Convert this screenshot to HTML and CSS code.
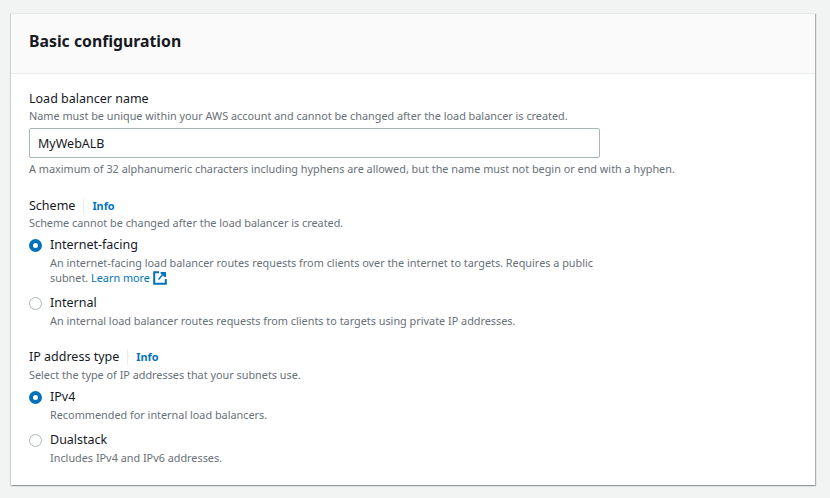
FILE: index.html
```html
<!DOCTYPE html>
<html lang="en">
<head>
<meta charset="utf-8">
<title>Basic configuration</title>
<link rel="stylesheet" href="styles.css">
</head>
<body>
<section class="card">
  <header class="card-head"><h2>Basic configuration</h2></header>
  <div class="card-body">
    <div class="field">
      <div class="label">Load balancer name</div>
      <div class="desc">Name must be unique within your AWS account and cannot be changed after the load balancer is created.</div>
      <input class="text-input" type="text" value="MyWebALB">
      <div class="desc hint">A maximum of 32 alphanumeric characters including hyphens are allowed, but the name must not begin or end with a hyphen.</div>
    </div>
    <div class="field scheme">
      <div class="label">Scheme<a class="info">Info</a></div>
      <div class="desc">Scheme cannot be changed after the load balancer is created.</div>
      <div class="radio on first">
        <span class="dot"></span>
        <div>
          <div class="radio-label">Internet-facing</div>
          <div class="desc radio-desc">An internet-facing load balancer routes requests from clients over the internet to targets. Requires a public subnet. <a class="link">Learn more</a>
            <svg class="ext" width="14" height="14" viewBox="0 0 14 14" aria-hidden="true"><path d="M6 1.2H1.2v11.6h11.6V8" fill="none" stroke="#0073bb" stroke-width="2"/><path d="M8 1h5v5h-1.6L9.9 4.5 6 9 5 8l3.8-4.4L7.6 2.4V1z" fill="#0073bb"/></svg>
          </div>
        </div>
      </div>
      <div class="radio">
        <span class="dot"></span>
        <div>
          <div class="radio-label">Internal</div>
          <div class="desc radio-desc">An internal load balancer routes requests from clients to targets using private IP addresses.</div>
        </div>
      </div>
    </div>
    <div class="field ip">
      <div class="label">IP address type<a class="info">Info</a></div>
      <div class="desc">Select the type of IP addresses that your subnets use.</div>
      <div class="radio on first">
        <span class="dot"></span>
        <div>
          <div class="radio-label">IPv4</div>
          <div class="desc radio-desc">Recommended for internal load balancers.</div>
        </div>
      </div>
      <div class="radio">
        <span class="dot"></span>
        <div>
          <div class="radio-label">Dualstack</div>
          <div class="desc radio-desc">Includes IPv4 and IPv6 addresses.</div>
        </div>
      </div>
    </div>
  </div>
</section>
</body>
</html>
```
FILE: styles.css
```css
* { box-sizing: border-box; }
html, body { margin: 0; height: 100%; }
body {
  background: #f2f3f3;
  font-family: "Noto Sans", "Open Sans", sans-serif;
  color: #16191f;
  padding: 13px 15px 0 11px;
  overflow: hidden;
}
.card {
  background: #fff;
  border-top: 1px solid #e6e9e9;
  box-shadow: 1px 1px 1px 0 rgba(0, 28, 36, 0.3), -1px 1px 1px 0 rgba(0, 28, 36, 0.15);
  height: 472px;
}
.card-head {
  background: #fafafa;
  border-bottom: 1px solid #eaeded;
  height: 60px;
  padding: 15px 18px 0;
}
h2 { margin: 0; font-size: 15.8px; line-height: 24px; font-weight: 700; }
.card-body { padding: 16px 18px 0; }
.label { font-size: 12.5px; line-height: 17px; margin-bottom: 1px; display: flex; align-items: center; }
.ip .label { margin-bottom: 2px; }
.desc { font-size: 10.85px; line-height: 16px; color: #687078; }
.text-input {
  display: block;
  width: 571px;
  height: 30px;
  margin-top: 4px;
  padding: 0 8px;
  border: 1px solid #aab7b8;
  border-radius: 2px;
  background: #fff;
  font: 12.5px/20px "Noto Sans", "Open Sans", sans-serif;
  color: #16191f;
}
.hint { margin-top: 3px; }
.info {
  font-size: 10.85px;
  font-weight: 700;
  color: #0073bb;
  margin-left: 8px;
  padding-left: 8px;
  border-left: 1px solid #eaeded;
  line-height: 16px;
}
.scheme { margin-top: 20px; }
.ip { margin-top: 20px; }
.radio { display: flex; gap: 8px; width: 571px; margin-top: 7px; }
.radio.first { margin-top: 3px; }
.dot {
  flex: none;
  width: 13px;
  height: 13px;
  margin-top: 5px;
  border-radius: 50%;
  border: 1px solid #aab7b8;
  background: #fff;
}
.on .dot { border: 4px solid #0073bb; }
.radio-label { font-size: 12.5px; line-height: 22px; }
.radio-desc { line-height: 15px; margin-top: -1px; }
.link { color: #0073bb; }
.ext { vertical-align: -3px; margin-left: 0; }
```
